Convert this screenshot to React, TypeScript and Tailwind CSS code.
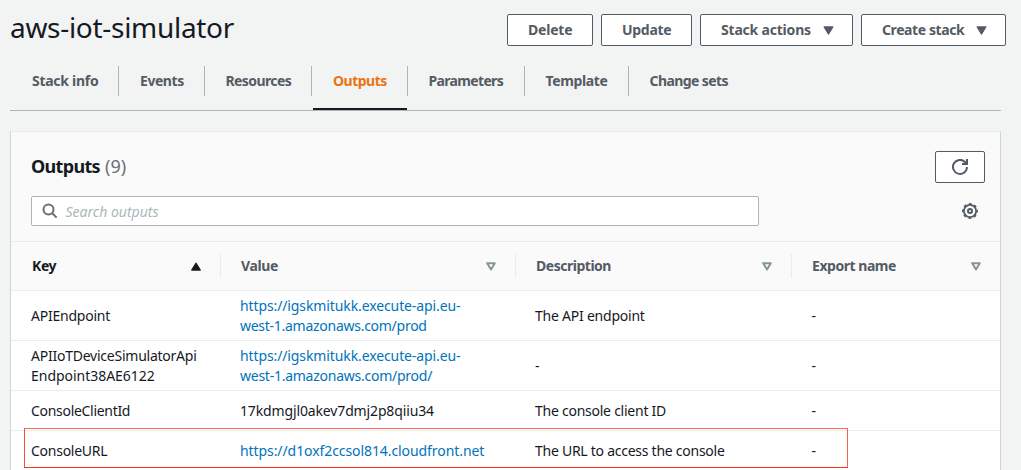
import type { ReactNode } from "react"

type Label = { text: string; tracking: string }

const tabs: (Label & { box: string; active?: boolean })[] = [
  { text: "Stack info", tracking: "tracking-[-0.28px]", box: "w-[109px] pl-[22px]" },
  { text: "Events", tracking: "tracking-[-0.44px]", box: "w-[86px] pl-[21px]" },
  { text: "Resources", tracking: "tracking-[-0.6px]", box: "w-[107px] pl-[20.5px]" },
  { text: "Outputs", tracking: "tracking-[-0.5px]", box: "w-[96px] pl-[21px]", active: true },
  { text: "Parameters", tracking: "tracking-[-0.66px]", box: "w-[117px] pl-[20.5px]" },
  { text: "Template", tracking: "tracking-[-0.37px]", box: "w-[104px] pl-[20.5px]" },
  { text: "Change sets", tracking: "tracking-[-0.58px]", box: "w-[120px] pl-[20.5px]" },
]

const columns: (Label & { inset: string; sorted?: boolean })[] = [
  { text: "Key", tracking: "tracking-[-0.4px]", inset: "pl-[21px]", sorted: true },
  { text: "Value", tracking: "tracking-[-0.4px]", inset: "pl-[20px]" },
  { text: "Description", tracking: "tracking-[-0.48px]", inset: "pl-[20px]" },
  { text: "Export name", tracking: "tracking-[-0.46px]", inset: "pl-[20px]" },
]

type Row = { height: string; key: Label[]; value: Label[]; link?: boolean; description: Label }

const dash: Label = { text: "-", tracking: "tracking-normal" }

const rows: Row[] = [
  {
    height: "h-[50px]",
    key: [{ text: "APIEndpoint", tracking: "tracking-[-0.23px]" }],
    value: [
      { text: "https://igskmitukk.execute-api.eu-", tracking: "tracking-[-0.11px]" },
      { text: "west-1.amazonaws.com/prod", tracking: "tracking-[-0.27px]" },
    ],
    link: true,
    description: { text: "The API endpoint", tracking: "tracking-[-0.23px]" },
  },
  {
    height: "h-[50px]",
    key: [
      { text: "APIIoTDeviceSimulatorApi", tracking: "tracking-[-0.24px]" },
      { text: "Endpoint38AE6122", tracking: "tracking-[-0.03px]" },
    ],
    value: [
      { text: "https://igskmitukk.execute-api.eu-", tracking: "tracking-[-0.11px]" },
      { text: "west-1.amazonaws.com/prod/", tracking: "tracking-[-0.25px]" },
    ],
    link: true,
    description: dash,
  },
  {
    height: "h-[40px]",
    key: [{ text: "ConsoleClientId", tracking: "tracking-[-0.3px]" }],
    value: [{ text: "17kdmgjl0akev7dmj2p8qiiu34", tracking: "tracking-[-0.14px]" }],
    description: { text: "The console client ID", tracking: "tracking-[-0.25px]" },
  },
  {
    height: "h-[40px]",
    key: [{ text: "ConsoleURL", tracking: "tracking-[-0.26px]" }],
    value: [{ text: "https://d1oxf2ccsol814.cloudfront.net", tracking: "tracking-[-0.08px]" }],
    link: true,
    description: { text: "The URL to access the console", tracking: "tracking-[-0.26px]" },
  },
]

const grid = "grid grid-cols-[210px_295px_276px_208px]"

function Lines({ lines }: { lines: Label[] }) {
  return (
    <>
      {lines.map((line) => (
        <span key={line.text} className={`block ${line.tracking}`}>
          {line.text}
        </span>
      ))}
    </>
  )
}

function Button({ box, tracking, caret, children }: { box: string; tracking: string; caret?: boolean; children: ReactNode }) {
  return (
    <button
      className={`flex h-8 items-center rounded-[2px] border border-[#545b64] bg-white pl-5 text-sm leading-5 font-bold whitespace-nowrap text-[#545b64] ${box}`}
    >
      <span className={tracking}>{children}</span>
      {caret && (
        <svg className="ml-auto" width="11" height="9" viewBox="0 0 11 9">
          <path d="M1.2 1h8.6L5.5 8z" fill="#545b64" stroke="#545b64" strokeWidth="1.4" strokeLinejoin="round" />
        </svg>
      )}
    </button>
  )
}

function SortIcon({ sorted }: { sorted?: boolean }) {
  return sorted ? (
    <svg width="10" height="9" viewBox="0 0 10 9">
      <path d="M.8 8h8.4L5 1.3z" fill="#16191f" stroke="#16191f" strokeWidth="1.4" strokeLinejoin="round" />
    </svg>
  ) : (
    <svg width="10" height="9" viewBox="0 0 10 9">
      <path d="M1.2 1.2h7.6L5 7.4z" fill="none" stroke="#879596" strokeWidth="2" strokeLinejoin="round" />
    </svg>
  )
}

export default function App() {
  return (
    <div className="h-[470px] overflow-hidden bg-[#f2f3f3] pl-[10px] font-['Noto_Sans',sans-serif] text-sm leading-5 text-[#16191f]">
      <header className="flex h-[66px] items-start justify-between pr-[15px]">
        <h1 className="pt-[9px] text-[28px] leading-9 tracking-[-0.3px]">aws-iot-simulator</h1>
        <div className="flex gap-2 pt-[14px]">
          <Button box="w-[86px]" tracking="tracking-[-0.2px]">Delete</Button>
          <Button box="w-[91px]" tracking="tracking-[-0.3px]">Update</Button>
          <Button box="w-[153px] pr-[18px]" tracking="tracking-[-0.2px]" caret>Stack actions</Button>
          <Button box="w-[145px] pr-[18px]" tracking="tracking-[-0.4px]" caret>Create stack</Button>
        </div>
      </header>

      <nav className="flex h-[45px] w-[991px] border-b border-[#aab7b8]">
        {tabs.map((tab, i) => (
          <div key={tab.text} className={`relative h-[30px] leading-[30px] font-bold whitespace-nowrap ${tab.box} ${i < tabs.length - 1 ? "border-r border-[#aab7b8]" : ""} ${tab.active ? "text-[#ec7211]" : "text-[#545b64]"}`}>
            <span className={tab.tracking}>{tab.text}</span>
            {tab.active && <span className="absolute top-[42px] right-0 left-px h-[2px] bg-[#16191f]" />}
          </div>
        ))}
      </nav>

      <section className="relative mt-[20px] h-[345px] w-[991px] border border-t-[#eaeded] border-r-[#d0d4d4] border-b-0 border-l-[#d0d4d4] bg-white">
        <div className="h-[110px] border-b border-[#eaeded] bg-[#fafafa] pt-[19px] pr-[15px] pl-5">
          <div className="flex h-[32px] items-center justify-between">
            <h2 className="pb-[2px] text-lg leading-6 font-bold">
              <span className="tracking-[-0.67px]">Outputs</span>
              <span className="ml-[5px] font-normal text-[#687078]">(9)</span>
            </h2>
            <button className="flex h-8 w-[50px] items-center justify-center rounded-[2px] border border-[#545b64] bg-white">
              <svg width="16" height="16" viewBox="0 0 16 16" fill="none" stroke="#545b64" strokeWidth="2">
                <path d="M10 5h5V0" />
                <path d="M15 8a7 7 0 1 1-2-5l2 2" />
              </svg>
            </button>
          </div>
          <div className="mt-[13px] flex items-center justify-between pr-[7px]">
            <div className="flex h-[30px] w-[728px] items-center rounded-[2px] border border-[#aab7b8] bg-white pl-[9.5px]">
              <svg width="16" height="16" viewBox="0 0 16 16" fill="none" stroke="#687078" strokeWidth="2">
                <circle cx="6.5" cy="6.5" r="5" />
                <path d="m10 10 4.6 4.6" />
              </svg>
              <span className="mt-[2px] ml-2 text-[#aab7b8] italic">Search outputs</span>
            </div>
            <svg width="16" height="16" viewBox="0 0 16 16" fill="none" stroke="#545b64">
              <circle cx="8" cy="8" r="6.1" strokeWidth="1.8" />
              <circle cx="8" cy="8" r="7.1" strokeWidth="1.7" strokeDasharray="2.8 2.776" strokeDashoffset="1.4" />
              <circle cx="8" cy="8" r="2" strokeWidth="2" />
            </svg>
          </div>
        </div>

        <div className={`${grid} h-[49px] items-center border-b border-[#eaeded] bg-[#fafafa]`}>
          {columns.map((column, i) => (
            <div
              key={column.text}
              className={`flex h-6 items-center justify-between pr-[19px] font-bold ${column.inset} ${i < 3 ? "border-r border-[#eaeded]" : ""} ${column.sorted ? "text-[#16191f]" : "text-[#545b64]"}`}
            >
              <span className={column.tracking}>{column.text}</span>
              <SortIcon sorted={column.sorted} />
            </div>
          ))}
        </div>

        {rows.map((row) => (
          <div key={row.key[0].text} className={`${grid} ${row.height} items-center border-b border-[#eaeded] whitespace-nowrap`}>
            <div className="pl-5"><Lines lines={row.key} /></div>
            <div className={`pl-[19px] ${row.link ? "text-[#0073bb]" : ""}`}><Lines lines={row.value} /></div>
            <div className="pl-[19px]"><Lines lines={[row.description]} /></div>
            <div className="pl-[19.5px]">-</div>
          </div>
        ))}
        <div className="absolute top-[296px] left-[13px] h-[40px] w-[824px] border border-t-[#ff6f58] border-r-[#ff6049] border-b-[#f5330f] border-l-[#ff4d33]" />
      </section>
    </div>
  )
}
